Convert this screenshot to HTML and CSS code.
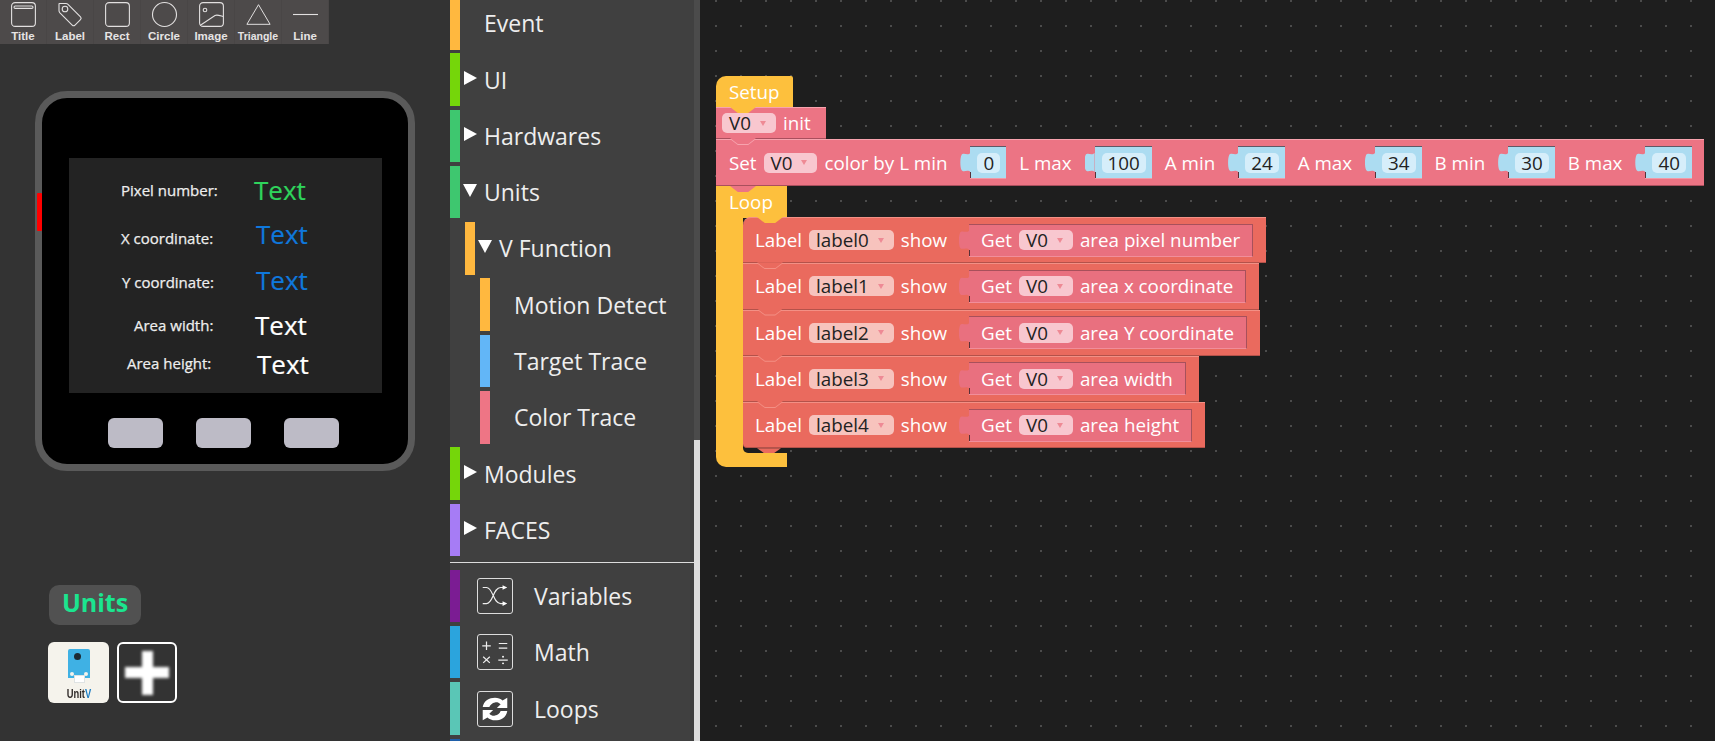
FILE: index.html
```html
<!DOCTYPE html>
<html lang="en">
<head>
    <meta charset="UTF-8">
    <title>UIFlow Blockly</title>
    <link rel="stylesheet" href="styles.css">
</head>
<body>
    <section class="designer">
        <div class="toolbar">
            <div class="tool">
                <svg viewBox="0 0 25 25"><rect x=".6" y=".6" width="23.8" height="23.8" rx="3.5"/><rect x="3" y="4" width="19" height="2.4" rx="1.2"/></svg>
                <span>Title</span>
            </div>
            <div class="tool">
                <svg viewBox="0 0 25 25"><path d="M1.500 1.500h6.500a3 3 0 0 1 2 .8l12.500 12.500a2 2 0 0 1 0 2.800l-5.500 5.500a2 2 0 0 1-2.800 0L1.700 10.600a3 3 0 0 1-.7-2V2a.5.5 0 0 1 .5-.5z"/><circle cx="7" cy="7" r="2.800"/></svg>
                <span>Label</span>
            </div>
            <div class="tool">
                <svg viewBox="0 0 25 25"><rect x=".6" y=".6" width="23.800" height="23.800" rx="3.500"/></svg>
                <span>Rect</span>
            </div>
            <div class="tool">
                <svg viewBox="0 0 25 25"><circle cx="12.500" cy="12.500" r="12"/></svg>
                <span>Circle</span>
            </div>
            <div class="tool">
                <svg viewBox="0 0 25 25"><rect x=".6" y=".6" width="23.800" height="23.800" rx="3.500"/><circle cx="6" cy="8" r="1.800"/><path d="M1 23.500 16 13.500c2-1 3-.5 8 1"/></svg>
                <span>Image</span>
            </div>
            <div class="tool">
                <svg viewBox="0 0 28 25"><path d="M14 1.500 27 23.500H1z"/></svg>
                <span class="tool-small">Triangle</span>
            </div>
            <div class="tool">
                <svg viewBox="0 0 25 25"><path d="M0 12.500h25"/></svg>
                <span>Line</span>
            </div>
        </div>

        <div class="device">
            <i class="power"></i>
            <div class="screen">
                <span class="cap cap-1">Pixel number:</span>
                <span class="val val-1 green">Text</span>
                <span class="cap cap-2">X coordinate:</span>
                <span class="val val-2 blue">Text</span>
                <span class="cap cap-3">Y coordinate:</span>
                <span class="val val-3 blue">Text</span>
                <span class="cap cap-4">Area width:</span>
                <span class="val val-4">Text</span>
                <span class="cap cap-5">Area height:</span>
                <span class="val val-5">Text</span>
            </div>
            <div class="hw-buttons">
                <i></i><i></i><i></i>
            </div>
        </div>

        <div class="units-pill">Units</div>
        <div class="unit-tiles">
            <div class="tile tile-unit">
                <div class="unitv">
                    <i class="lens"></i>
                    <i class="pin pin-l"></i>
                    <i class="pin pin-r"></i>
                    <i class="plug"></i>
                </div>
                <b>Unit<em>V</em></b>
            </div>
            <div class="tile tile-add"><i></i></div>
        </div>
    </section>

    <nav class="sidebar">
        <ul class="tree">
            <li class="cat first"><i class="stripe yellow-s"></i><span class="slot"></span>Event</li>
            <li class="cat"><i class="stripe lime-s"></i><span class="slot"><i class="arrow-right"></i></span>UI</li>
            <li class="cat"><i class="stripe green-s"></i><span class="slot"><i class="arrow-right"></i></span>Hardwares</li>
            <li class="cat"><i class="stripe green-s"></i><span class="slot"><i class="arrow-down"></i></span>Units</li>
            <li class="cat depth-1"><i class="stripe yellow-s"></i><span class="slot"><i class="arrow-down"></i></span>V Function</li>
            <li class="cat depth-2"><i class="stripe yellow-s"></i><span class="slot"></span>Motion Detect</li>
            <li class="cat depth-2"><i class="stripe sky-s"></i><span class="slot"></span>Target Trace</li>
            <li class="cat depth-2"><i class="stripe pink-s"></i><span class="slot"></span>Color Trace</li>
            <li class="cat"><i class="stripe lime-s"></i><span class="slot"><i class="arrow-right"></i></span>Modules</li>
            <li class="cat"><i class="stripe violet-s"></i><span class="slot"><i class="arrow-right"></i></span>FACES</li>
            <li class="divider"></li>
            <li class="cat">
                <i class="stripe purple-s"></i>
                <svg class="cat-icon" viewBox="0 0 36 36"><path d="M5 9h4c7 0 7 17 15 17h3M5 26h4c7 0 7-17 15-17h3"/><path class="fill" d="M26 6.500 31 9l-5 2.500zM26 23.500l5 2.500-5 2.500z"/></svg>
                Variables
            </li>
            <li class="cat">
                <i class="stripe blue-s"></i>
                <svg class="cat-icon" viewBox="0 0 36 36"><path d="M4.500 11.500h9M9 7v9M22 9h9M22 14h9M5.500 23l7 6.500M12.500 23l-7 6.500M21.500 26.500h10"/><path class="fill" d="M25.500 23a1 1 0 1 0 2 0 1 1 0 1 0-2 0zM25.500 30a1 1 0 1 0 2 0 1 1 0 1 0-2 0z"/></svg>
                Math
            </li>
            <li class="cat">
                <i class="stripe teal-s"></i>
                <svg class="cat-icon" viewBox="0 0 36 36"><path class="fill" d="M5 16C6 9 12 6 18 6c3 0 6 1 8 3l5-3v11H20l4-4c-2-2-4-2.500-6-2-3 .5-5 2.500-6 5z"/><path class="fill" d="M31 20c-1 7-7 10-13 10-3 0-6-1-8-3l-5 3V19h11l-4 4c2 2 4 2.500 6 2 3-.5 5-2.500 6-5z"/></svg>
                Loops
            </li>
            <li class="cat"><i class="stripe navy-s"></i></li>
        </ul>
        <div class="scrollbar"><div class="thumb"></div></div>
    </nav>

    <main class="canvas">
        <div class="stack">
            <div class="hat">Setup</div>
            <div class="block pink notch-from-yellow init-block">
                <span class="field">V0<i></i></span> init
            </div>
            <div class="block pink notch-line set-block">
                Set <span class="field">V0<i></i></span> color by L min
                <span class="input"><span class="num">0</span></span>
                L max
                <span class="input"><span class="num">100</span></span>
                A min
                <span class="input"><span class="num">24</span></span>
                A max
                <span class="input"><span class="num">34</span></span>
                B min
                <span class="input"><span class="num">30</span></span>
                B max
                <span class="input"><span class="num">40</span></span>
            </div>
            <div class="loop">
                <div class="loop-head notch-over">Loop</div>
                <div class="loop-body">
                    <div class="block red notch-from-yellow">
                        Label <span class="field">label0<i></i></span> show
                        <span class="getter">Get <span class="field">V0<i></i></span> area pixel number</span>
                    </div>
                    <div class="block red notch-line">
                        Label <span class="field">label1<i></i></span> show
                        <span class="getter">Get <span class="field">V0<i></i></span> area x coordinate</span>
                    </div>
                    <div class="block red notch-line">
                        Label <span class="field">label2<i></i></span> show
                        <span class="getter">Get <span class="field">V0<i></i></span> area Y coordinate</span>
                    </div>
                    <div class="block red notch-line">
                        Label <span class="field">label3<i></i></span> show
                        <span class="getter">Get <span class="field">V0<i></i></span> area width</span>
                    </div>
                    <div class="block red notch-line last-row">
                        Label <span class="field">label4<i></i></span> show
                        <span class="getter">Get <span class="field">V0<i></i></span> area height</span>
                    </div>
                </div>
                <div class="loop-foot"></div>
            </div>
        </div>
    </main>
</body>
</html>
```

FILE: styles.css
```css
* {
    box-sizing: border-box;
}

body {
    margin: 0;
    width: 1715px;
    height: 741px;
    overflow: hidden;
    display: flex;
    font-family: "Open Sans", "Noto Sans", sans-serif;
    background: #1e1e1e;
    color: #fff;
}

/* left: screen designer */
.designer {
    width: 450px;
    flex: none;
    background: #333;
}

.toolbar {
    display: flex;
    width: 329px;
    height: 44px;
    background: #4d4a4a;
}

.tool {
    width: 47px;
    display: flex;
    flex-direction: column;
    align-items: center;
    padding-top: 2px;
    border-right: 1px solid rgba(0, 0, 0, 0.05);
}

.tool svg {
    width: 25px;
    height: 25px;
    flex: none;
    fill: none;
    stroke: #e2e0e0;
    stroke-width: 1.1;
    overflow: visible;
}

.tool span {
    font: bold 11.5px/14px "Liberation Sans", sans-serif;
    color: #e6e4e4;
    margin-top: 2px;
    white-space: nowrap;
}

.tool .tool-small {
    font-size: 10.5px;
}

.device {
    position: relative;
    width: 380px;
    height: 380px;
    margin: 47px 0 0 35px;
    background: #000;
    border: 7px solid #5a5a5a;
    border-radius: 32px;
    padding: 60px 0 0 27px;
}

.power {
    position: absolute;
    left: -5px;
    top: 95px;
    width: 5px;
    height: 38px;
    background: #f00;
    border-radius: 1px;
}

.screen {
    position: relative;
    width: 313px;
    height: 235px;
    background: #232323;
}

/* screen items are placed freely by the designer */
.cap {
    position: absolute;
    font-size: 15px;
    line-height: 20px;
    color: #eee;
    -webkit-text-stroke: 0.25px #eee;
    white-space: nowrap;
}

.val {
    position: absolute;
    font-size: 26px;
    line-height: 30px;
    color: #fff;
    -webkit-text-stroke: 0.2px currentColor;
}

.green { color: #2fd45c; }
.blue { color: #0f78dc; }

.cap-1 { left: 52px; top: 22px; }
.cap-2 { left: 52px; top: 70px; }
.cap-3 { left: 53px; top: 114px; }
.cap-4 { left: 65px; top: 157px; }
.cap-5 { left: 58px; top: 195px; }
.val-1 { left: 185px; top: 17px; }
.val-2 { left: 187px; top: 61px; }
.val-3 { left: 187px; top: 107px; }
.val-4 { left: 186px; top: 152px; }
.val-5 { left: 188px; top: 191px; }

.hw-buttons {
    display: flex;
    gap: 33px;
    margin: 25px 0 0 39px;
}

.hw-buttons i {
    width: 55px;
    height: 30px;
    background: #bdbbc6;
    border-radius: 6px;
}

.units-pill {
    width: 92px;
    height: 40px;
    margin: 114px 0 0 49px;
    background: #515151;
    border-radius: 10px;
    color: #1be58f;
    font-size: 25px;
    line-height: 35px;
    font-weight: 700;
    text-align: center;
}

.unit-tiles {
    display: flex;
    gap: 8px;
    margin: 17px 0 0 48px;
}

.tile {
    width: 61px;
    height: 61px;
    border-radius: 6px;
}

.tile-add {
    width: 60px;
}

.tile-unit {
    background: #f5f3ec;
    display: flex;
    flex-direction: column;
    align-items: center;
    padding-top: 7px;
}

.tile-unit b {
    font: bold 13px/12px "Liberation Sans", sans-serif;
    color: #2f2a28;
    margin-top: 2px;
    transform: scaleX(0.72);
}

.tile-unit em {
    font-style: normal;
    color: #1f7fc4;
}

.unitv {
    position: relative;
    width: 22px;
    height: 37px;
    background: linear-gradient(#3fb1e4 29px, transparent 29px);
    border-radius: 2px;
}

.lens {
    position: absolute;
    left: 6px;
    top: 4px;
    width: 7px;
    height: 7px;
    background: #1d2a33;
    border-radius: 50%;
}

.pin {
    position: absolute;
    top: 23px;
    width: 4px;
    height: 4px;
    background: #f5f3ec;
    border-radius: 50%;
}

.pin-l { left: 2px; }
.pin-r { right: 2px; }

.plug {
    position: absolute;
    left: 6px;
    top: 26px;
    width: 11px;
    height: 8px;
    background: #fff;
    border: 1px solid #dfe3e3;
}

.tile-add {
    position: relative;
    border: 2px solid #fff;
}

.tile-add i {
    position: absolute;
    left: 6px;
    top: 6.5px;
    width: 44px;
    height: 44px;
    background:
        radial-gradient(circle, #fff 5px, transparent 5.500px) center / 44px 44px no-repeat,
        linear-gradient(#fff, #fff) center / 44px 11px no-repeat,
        linear-gradient(#fff, #fff) center / 11px 44px no-repeat;
    filter: blur(1.4px);
}

/* middle: block categories */
.sidebar {
    width: 250px;
    flex: none;
    display: flex;
    background: #404040;
    overflow: hidden;
}

.tree {
    flex: 1;
    list-style: none;
    margin: -3px 0 0;
    padding: 0;
}

.cat {
    display: flex;
    align-items: center;
    height: 52.5px;
    margin-bottom: 3.8px;
    font-size: 23px;
    color: #eee;
    white-space: nowrap;
}

.depth-1 { margin-left: 15px; }
.depth-2 { margin-left: 30px; }

.stripe {
    width: 10px;
    height: 100%;
    flex: none;
}

.yellow-s { background: #ffb83f; }
.lime-s { background: #75d60a; }
.green-s { background: #3ec76f; }
.sky-s { background: #62b6f7; }
.pink-s { background: #ee7585; }
.violet-s { background: #a67cf5; }
.purple-s { background: #7b1c93; }
.blue-s { background: #2ba4dd; }
.teal-s { background: #5ac6b6; }
.navy-s { background: #1f5fa8; }

.slot {
    width: 24px;
    height: 100%;
    flex: none;
    display: flex;
    align-items: center;
    padding-left: 4px;
}

.arrow-right {
    width: 0;
    height: 0;
    margin-bottom: 3px;
    border-left: 13px solid #fff;
    border-top: 7px solid transparent;
    border-bottom: 7px solid transparent;
}

.arrow-down {
    width: 0;
    height: 0;
    margin: 0 0 3px -1px;
    border-top: 13px solid #fff;
    border-left: 7.5px solid transparent;
    border-right: 7.5px solid transparent;
}

.divider {
    height: 1px;
    margin: 6px 0 6.5px;
    background: #ddd;
}

.cat-icon {
    width: 36px;
    height: 36px;
    flex: none;
    margin: 0 21px 0 17px;
    border: 1px solid #ddd;
    border-radius: 3px;
    fill: none;
    stroke: #eee;
    stroke-width: 1.3;
}

.cat-icon .fill {
    fill: #fff;
    stroke: none;
}

.scrollbar {
    width: 6px;
    flex: none;
    background: #ddd;
}

.thumb {
    height: 440px;
    background: #4b4b4b;
}

/* right: workspace */
.canvas {
    flex: 1;
    min-width: 0;
    padding: 76px 0 0 16px;
    background: #1e1e1e radial-gradient(circle at 1px 1px, #4c4c4c 0.7px, transparent 1.1px) 15px 0 / 25px 25px;
}

.stack {
    display: flex;
    flex-direction: column;
    align-items: flex-start;
    font-size: 18.8px;
    color: #fff;
    white-space: nowrap;
}

.hat {
    width: 77px;
    height: 31px;
    padding-left: 13px;
    line-height: 33px;
    background: #fdc03d;
    border-radius: 10px 2px 0 0;
}

.block {
    position: relative;
    display: flex;
    align-items: center;
    gap: 7px;
    border-top: 1px solid;
    border-bottom: 1px solid;
}

.pink {
    background: #ec7484;
    border-top-color: #f7a3ae;
    border-bottom-color: #a94f5d;
}

.red {
    background: #ea6a5e;
    border-top-color: #f39085;
    border-bottom-color: #b4524a;
    height: 46.25px;
    padding: 0 13px 0 12px;
}

.init-block {
    height: 32px;
    padding: 0 15px 0 6px;
}

.set-block {
    height: 47px;
    padding: 0 6px 0 13px;
}

/* notch of the block above */
.block::before,
.loop-head.notch-over::after {
    content: "";
    position: absolute;
    left: 14px;
    top: -1px;
    width: 26px;
    height: 6px;
    clip-path: polygon(0 0, 100% 0, 70% 100%, 30% 100%);
}

.notch-from-yellow::before { background: #fdc03d; }
.pink.notch-line::before { background: #f7a3ae; }
.red.notch-line::before { background: #f39085; }

/* fill above the notch edge, leaves a 1px line */
.notch-line::after {
    content: "";
    position: absolute;
    left: 14px;
    top: -2px;
    width: 26px;
    height: 6px;
    clip-path: polygon(0 0, 100% 0, 70% 100%, 30% 100%);
}

.pink.notch-line::after { background: #ec7484; }
.red.notch-line::after { background: #ea6a5e; }

.loop-head.notch-over::after {
    top: 0;
    background: #ec7484;
}

.field {
    display: inline-flex;
    align-items: center;
    height: 20px;
    padding: 0 10px 0 7px;
    gap: 9px;
    color: #222;
    background: #f8c7cf;
    border-radius: 5px;
}

.red > .field {
    background: #f7c3bd;
}

.field i {
    width: 0;
    height: 0;
    border-top: 5px solid #ee8a95;
    border-left: 3px solid transparent;
    border-right: 3px solid transparent;
}

.input {
    position: relative;
    display: flex;
    align-items: center;
    height: 33px;
    margin: 0 6px 0 16px;
    padding: 0 6px 0 7px;
    background: #acdcf1;
    border-top: 1px solid #5f5866;
    border-bottom: 1px solid #f29aa6;
}

.input::before,
.getter::before {
    content: "";
    position: absolute;
    left: -10px;
    top: 5px;
    width: 10px;
    height: 22px;
    background: #acdcf1;
    clip-path: path("M10 1C7 4 3 0 1 3C-.5 6 -.5 15 1 18C3 21 7 17 10 20Z");
}

/* dark edge under the tab */
.input::after,
.getter::after {
    content: "";
    position: absolute;
    left: 0;
    bottom: 0;
    width: 1px;
    height: 6px;
    background: #5a3038;
}

.num {
    height: 20px;
    line-height: 20px;
    padding: 0 6px;
    color: #222;
    background: #d6eefa;
    border-radius: 5px;
}

.getter {
    position: relative;
    display: flex;
    align-items: center;
    gap: 7px;
    height: 33px;
    margin-left: 15px;
    padding: 0 12px 0 12px;
    background: #e9707f;
    border: 1px solid #a8505b;
    border-left: 0;
    border-bottom-color: #f18e9b;
}

.getter::before {
    background: #e9707f;
}

.loop {
    position: relative;
    display: flex;
    flex-direction: column;
    align-items: flex-start;
}

.loop-head {
    position: relative;
    width: 71px;
    height: 32px;
    padding-left: 13px;
    line-height: 33px;
    background: #fdc03d;
}

.loop-body {
    display: flex;
    flex-direction: column;
    align-items: flex-start;
    border-left: 27px solid #fdc03d;
    margin-top: -1px;
}

.loop-body .block:first-child {
    border-top-left-radius: 8px;
}

.loop-foot {
    position: relative;
    width: 71px;
    height: 19px;
    background: #fdc03d;
    border-radius: 0 0 0 10px;
}

.loop-foot::before {
    content: "";
    position: absolute;
    left: 27px;
    top: 0;
    width: 44px;
    height: 5px;
    background: #1e1e1e;
    border-bottom-left-radius: 5px;
}

.loop-foot::after {
    content: "";
    position: absolute;
    left: 41px;
    top: 0;
    width: 24px;
    height: 5px;
    background: #ea6a5e;
    clip-path: polygon(0 0, 100% 0, 70% 100%, 30% 100%);
}

.last-row {
    border-bottom-left-radius: 4px;
}
```
